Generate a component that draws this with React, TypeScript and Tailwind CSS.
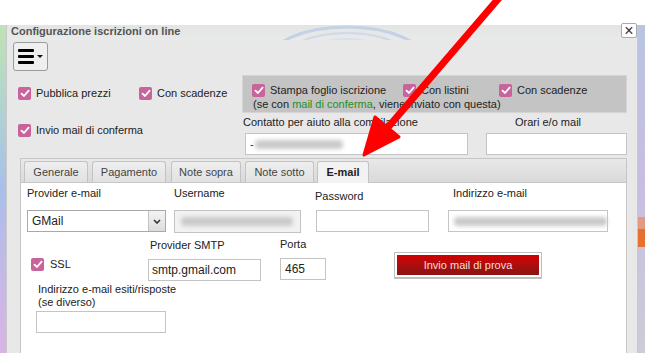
import type { ReactNode } from 'react';

function Check() {
  return (
    <span className="flex h-[13px] w-[13px] shrink-0 items-center justify-center rounded-[2px] bg-[#c8639c]">
      <svg width="10" height="9" viewBox="0 0 10 9" fill="none">
        <path d="M1.5 4.6 L4 7 L8.6 1.6" stroke="#fff" strokeWidth="1.8" strokeLinecap="round" strokeLinejoin="round" />
      </svg>
    </span>
  );
}

function CheckItem({ label, className = '' }: { label: ReactNode; className?: string }) {
  return (
    <div className={`flex h-[13px] items-center gap-[5px] ${className}`}>
      <Check />
      <span className="whitespace-nowrap">{label}</span>
    </div>
  );
}

function Blur({ w }: { w: number }) {
  return <span className="block h-[9px] rounded-sm bg-[#c9c9c9] blur-[2px]" style={{ width: w }} />;
}

function Tab({ label, active = false, className = '' }: { label: string; active?: boolean; className?: string }) {
  return (
    <div
      className={`flex items-center justify-center rounded-t-[3px] border border-b-0 border-[#c3c3c3] ${
        active ? 'h-[22px] bg-[#f2f2f2] font-bold text-[#222]' : 'h-[21px] bg-gradient-to-b from-[#eeeeee] to-[#e2e2e2] text-[#444]'
      } ${className}`}
    >
      {label}
    </div>
  );
}

export default function App() {
  return (
    <div className="relative h-[353px] w-[645px] overflow-hidden bg-white font-['Liberation_Sans',Arial,sans-serif] text-[11px] leading-[13px] text-[#222]">
      <div className="h-[25px] bg-white" />
      <div className="flex h-[328px]">
        {/* desktop behind, left */}
        <div className="w-[6px] bg-gradient-to-b from-[#bfe3b3] via-[#a9bfe9] to-[#d9b3e6]" />

        {/* dialog */}
        <div className="relative flex w-[632px] flex-col border-x border-[#c9c9c9] bg-[#e8e8e8]">
          <div className="relative h-[15px] overflow-hidden bg-gradient-to-b from-[#e2e5e2] to-[#e9ebea]">
            <svg className="absolute left-[250px] top-[-2px]" width="200" height="20" viewBox="0 0 200 20" fill="none">
              <ellipse cx="90" cy="40" rx="80" ry="36" stroke="#c4d1e6" strokeWidth="3" />
              <ellipse cx="90" cy="40" rx="66" ry="30" stroke="#cfd9ea" strokeWidth="2" />
              <ellipse cx="90" cy="40" rx="50" ry="24" stroke="#d8e0ee" strokeWidth="2" />
            </svg>
            <div className="relative pl-[4px] text-[11px] font-bold leading-[13px] text-[#555]">
              Configurazione iscrizioni on line
            </div>
          </div>
          <div className="absolute right-[0px] top-[-2px] flex h-[15px] w-[16px] items-center justify-center rounded-[2px] border border-[#aaa] bg-white text-[16px] leading-none text-[#333]">
            ×
          </div>

          {/* hamburger */}
          <div className="ml-[6px] mt-[2px] flex h-[29px] w-[35px] items-center rounded-[3px] border border-[#9a9a9a] bg-[#efefef] pl-[4px]">
            <div className="flex flex-col gap-[3px]">
              <span className="block h-[3px] w-[16px] rounded-[1px] bg-black" />
              <span className="block h-[3px] w-[16px] rounded-[1px] bg-black" />
              <span className="block h-[3px] w-[16px] rounded-[1px] bg-black" />
            </div>
            <svg className="ml-[3px]" width="6" height="4" viewBox="0 0 6 4">
              <path d="M0 0 H6 L3 3 Z" fill="#111" />
            </svg>
          </div>

          {/* upper options */}
          <div className="mt-[4px] flex h-[83px]">
            <div className="w-[235px] pl-[11px]">
              <div className="mt-[12px] flex">
                <CheckItem label="Pubblica prezzi" className="w-[121px]" />
                <CheckItem label="Con scadenze" />
              </div>
              <CheckItem label="Invio mail di conferma" className="mt-[24px]" />
            </div>
            <div className="w-[385px]">
              <div className="h-[38px] border border-[#d4d4d4] bg-[#c4c4c4] pl-[9px] pt-[8px]">
                <div className="flex">
                  <CheckItem label="Stampa foglio iscrizione" className="w-[151px]" />
                  <CheckItem label="Con listini" className="w-[96px]" />
                  <CheckItem label="Con scadenze" />
                </div>
                <div className="mt-[1px] pl-[1px]">
                  (se con <span className="text-[#1f8f1f]">mail di conferma</span>, viene inviato con questa)
                </div>
              </div>
              <div className="mt-[3px] flex h-[13px]">
                <span className="w-[273px] pl-[1px]">Contatto per aiuto alla compilazione</span>
                <span>Orari e/o mail</span>
              </div>
              <div className="mt-[4px] flex">
                <div className="ml-[3px] flex h-[22px] w-[223px] items-center border border-[#c4c4c4] bg-white pl-[4px]">
                  <span className="mr-[1px]">-</span>
                  <Blur w={88} />
                </div>
                <div className="ml-[18px] h-[22px] w-[141px] border border-[#c4c4c4] bg-white" />
              </div>
            </div>
          </div>

          {/* tab panel */}
          <div className="ml-[13px] flex w-[607px] flex-1 flex-col border border-b-0 border-[#c6c6c6]">
            <div className="flex h-[24px] items-end border-b border-[#c6c6c6] bg-gradient-to-b from-[#e9e9e9] to-[#d9d9d9] pl-[3px]">
              <Tab label="Generale" className="w-[64px]" />
              <Tab label="Pagamento" className="ml-[4px] w-[74px]" />
              <Tab label="Note sopra" className="ml-[5px] w-[70px]" />
              <Tab label="Note sotto" className="ml-[4px] w-[69px]" />
              <Tab label="E-mail" active className="ml-[3px] mb-[-1px] w-[52px]" />
            </div>
            <div className="flex-1 bg-white">
              {/* row A */}
              <div className="flex pl-[6px] pt-[4px]">
                <div className="w-[147px]">
                  <div className="h-[23px]">Provider e-mail</div>
                  <div className="flex h-[22px] w-[139px] border border-[#a9a9a9] bg-white">
                    <span className="flex-1 pl-[4px] text-[12px] leading-[20px]">GMail</span>
                    <span className="flex w-[17px] items-center justify-center border-l border-[#c2c2c2] bg-gradient-to-b from-[#f4f4f4] to-[#dcdcdc]">
                      <svg width="8" height="5" viewBox="0 0 8 5">
                        <path d="M1 1 L4 4 L7 1" stroke="#333" strokeWidth="1.6" fill="none" />
                      </svg>
                    </span>
                  </div>
                </div>
                <div className="w-[141px]">
                  <div className="h-[23px]">Username</div>
                  <div className="flex h-[23px] w-[127px] items-center border border-[#c4c4c4] bg-[#f2f2f2] pl-[6px]">
                    <Blur w={112} />
                  </div>
                </div>
                <div className="w-[133px]">
                  <div className="h-[23px] pt-[3px]">Password</div>
                  <div className="ml-[1px] h-[22px] w-[113px] border border-[#c4c4c4] bg-white" />
                </div>
                <div>
                  <div className="h-[23px] pl-[5px]">Indirizzo e-mail</div>
                  <div className="flex h-[22px] w-[160px] items-center border border-[#c4c4c4] bg-white pl-[5px]">
                    <Blur w={160} />
                  </div>
                </div>
              </div>

              {/* row B */}
              <div className="mt-[3px] flex items-start">
                <div className="ml-[10px] w-[117px] pt-[22px]">
                  <CheckItem label="SSL" className="gap-[6px]" />
                </div>
                <div>
                  <div className="h-[23px] pl-[2px] pt-[3px]">Provider SMTP</div>
                  <div className="flex h-[22px] w-[113px] items-center border border-[#c4c4c4] bg-white pl-[3px] text-[12px]">
                    smtp.gmail.com
                  </div>
                </div>
                <div className="ml-[19px]">
                  <div className="h-[22px] pt-[2px]">Porta</div>
                  <div className="flex h-[22px] w-[46px] items-center border border-[#c4c4c4] bg-white pl-[4px] text-[12px]">
                    465
                  </div>
                </div>
                <div className="ml-[68px] mt-[16px] h-[27px] w-[148px] rounded-[1px] border border-b-2 border-[#bdbdbd] bg-white p-[2px]">
                  <div className="flex h-full items-center justify-center bg-gradient-to-b from-[#d20000] to-[#8a1212] text-[#f6dede]">
                    Invio mail di prova
                  </div>
                </div>
              </div>

              {/* row C */}
              <div className="mt-[1px] pl-[16px]">
                <div className="h-[29px] pl-[1px] pt-[1px]">
                  Indirizzo e-mail esiti/risposte
                  <br />
                  (se diverso)
                </div>
                <div className="ml-[-1px] h-[22px] w-[130px] border border-[#c4c4c4] bg-white" />
              </div>
            </div>
          </div>
        </div>

        {/* desktop behind, right */}
        <div className="flex flex-1 flex-col bg-gradient-to-b from-[#b9c4e2] via-[#c9bde0] to-[#cbcdd6]">
          <div className="mt-[192px] h-[12px] bg-[#e09a86]" />
          <div className="h-[18px] bg-[#e8702e]" />
        </div>
      </div>

      {/* annotation arrow */}
      <svg className="pointer-events-none absolute left-0 top-0" width="645" height="353" viewBox="0 0 645 353">
        <line x1="499" y1="-2" x2="384" y2="132" stroke="#f00" strokeWidth="7" strokeLinecap="round" />
        <polygon points="364,155 375,117 399,137" fill="#f00" stroke="#f00" strokeWidth="3" strokeLinejoin="round" />
      </svg>
    </div>
  );
}
